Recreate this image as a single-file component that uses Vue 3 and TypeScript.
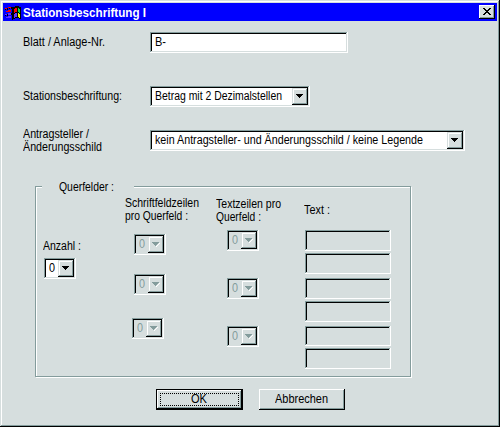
<script setup lang="ts">
import { defineComponent, h, type Directive } from 'vue'

// Condenses a label horizontally so that it takes the given width in pixels.
const vFit: Directive<HTMLElement, number> = {
  mounted(el, { value }) {
    const natural = el.getBoundingClientRect().width
    el.style.width = `${value}px`
    el.style.transform = `scaleX(${value / natural})`
  },
}

const DropButton = defineComponent({
  props: { disabled: Boolean },
  setup(props) {
    return () =>
      h('svg', { width: 16, height: 17, viewBox: '0 0 16 17', 'shape-rendering': 'crispEdges' }, [
        h('path', { fill: '#d6dede', d: 'M0 0h16v17H0z' }),
        h('path', { fill: '#fff', d: 'M1 1h13v1H2v13H1z' }),
        h('path', { fill: '#849c9c', d: 'M14 1h1v15H1v-1h13z' }),
        h('path', { fill: '#000', d: 'M15 0h1v17H0v-1h15z' }),
        props.disabled ? h('path', { fill: '#fff', d: 'M11 7h1v1h-1v1h-1v1H9v1H8v-1h1V9h1V8h1z' }) : null,
        h('path', { fill: props.disabled ? '#849c9c' : '#000', d: 'M4 6h7v1h-1v1H9v1H8v1H7V9H6V8H5V7H4z' }),
      ])
  },
})

const fieldRows = [1, 2, 3]
const textFields = [1, 2, 3, 4, 5, 6]
</script>

<template>
  <main class="window">
    <header class="titlebar">
      <svg class="logo" width="17" height="14" viewBox="0 0 17 14" shape-rendering="crispEdges">
        <path fill="#000" d="M8 1h2V0h4v1h2v12h-2v-1h-4v1H8v1H7V1z" />
        <path fill="#f00" d="M0 2h2v1H0zM3 1h3v1H3zM1 5h2v1H1zM3 4h3v2H3zM9 3h1V2h2v4h-2v1H9z" />
        <path fill="#63f" d="M0 8h2v1H0zM3 7h3v2H3zM1 11h2v1H1zM3 10h3v2H3zM9 8h1V7h2v4h-2v1H9z" />
        <path fill="#000" d="M2 2h1v2H2zM6 1h1v2H6zM2 8h1v2H2zM6 7h1v2H6zM0 3h1v1H0zM4 2h1v1H4zM0 9h1v1H0z" />
        <path fill="#0d4" d="M13 2h1v1h1v4h-1V6h-1z" />
        <path fill="#ff0" d="M13 7h1v1h1v4h-1v-1h-1z" />
      </svg>
      <h1><span v-fit="123" class="t">Stationsbeschriftung I</span></h1>
      <button class="close" aria-label="Schließen">
        <svg width="8" height="7" viewBox="0 0 8 7" shape-rendering="crispEdges">
          <path d="M0 0h2v1h1v1h2V1h1V0h2v1H7v1H6v1H5v1h1v1h1v1h1v1H6V6H5V5H3v1H2v1H0V6h1V5h1V4h1V3H2V2H1V1H0z" />
        </svg>
      </button>
    </header>

    <section class="form">
      <div class="row first">
        <label><span v-fit="82" class="t">Blatt / Anlage-Nr.</span></label>
        <div class="field sheet"><span v-fit="11" class="t">B-</span></div>
      </div>
      <div class="row second">
        <label><span v-fit="99" class="t">Stationsbeschriftung:</span></label>
        <div class="field amount"><span v-fit="127" class="t">Betrag mit 2 Dezimalstellen</span><DropButton /></div>
      </div>
      <div class="row third">
        <label>
          <span v-fit="66" class="t">Antragsteller /</span>
          <span v-fit="79" class="t">Änderungsschild</span>
        </label>
        <div class="field applicant">
          <span v-fit="268" class="t">kein Antragsteller- und Änderungsschild / keine Legende</span><DropButton />
        </div>
      </div>
    </section>

    <section class="group">
      <h2><span v-fit="55" class="t">Querfelder :</span></h2>
      <div class="columns">
        <div class="col count">
          <span v-fit="38" class="t">Anzahl :</span>
          <div class="field mini"><span v-fit="6" class="t">0</span><DropButton /></div>
        </div>
        <div class="col lines">
          <div class="heading">
            <span v-fit="74" class="t">Schriftfeldzeilen</span>
            <span v-fit="63" class="t">pro Querfeld :</span>
          </div>
          <div v-for="n in fieldRows" :key="n" class="field mini off">
            <span v-fit="6" class="t">0</span><DropButton disabled />
          </div>
        </div>
        <div class="col texts">
          <div class="heading">
            <span v-fit="65" class="t">Textzeilen pro</span>
            <span v-fit="45" class="t">Querfeld :</span>
          </div>
          <div v-for="n in fieldRows" :key="n" class="field mini off">
            <span v-fit="6" class="t">0</span><DropButton disabled />
          </div>
        </div>
        <div class="col content">
          <span v-fit="26" class="t">Text :</span>
          <div v-for="n in textFields" :key="n" class="field off"></div>
        </div>
      </div>
    </section>

    <footer class="actions">
      <button class="btn ok"><span class="focus"><span v-fit="16" class="t">OK</span></span></button>
      <button class="btn"><span v-fit="53" class="t">Abbrechen</span></button>
    </footer>
  </main>
</template>

<style>
body {
  margin: 0;
  background: #d6dede;
}
</style>

<style scoped>
.window {
  box-sizing: border-box;
  width: 500px;
  height: 427px;
  padding: 3px;
  overflow: hidden;
  display: flex;
  flex-direction: column;
  background: #d6dede;
  box-shadow: inset -1px -1px #000, inset 1px 1px #d6dede, inset -2px -2px #849c9c, inset 2px 2px #fff;
  font: 12.5px/13px "Liberation Sans", Arial, sans-serif;
  color: #000;
}
.window * {
  box-sizing: border-box;
}
.t {
  display: inline-block;
  white-space: nowrap;
  transform-origin: 0 50%;
}
h1, h2 {
  margin: 0;
  font: inherit;
}
.titlebar {
  flex: none;
  height: 18px;
  display: flex;
  align-items: center;
  padding: 0 2px;
  background: #00f;
}
.logo {
  display: block;
  margin-top: 1px;
}
h1 {
  flex: 1;
  margin-left: 1px;
  font-size: 13px;
  font-weight: bold;
  color: #fff;
}
.close {
  width: 16px;
  height: 14px;
  padding: 0 1px 1px 0;
  display: flex;
  align-items: center;
  justify-content: center;
  border: 0;
  background: #d6dede;
  box-shadow: inset -1px -1px #000, inset 1px 1px #fff, inset -2px -2px #849c9c;
}
.form {
  padding: 11px 0 0 20px;
}
.row {
  display: flex;
  height: 21px;
}
.row label {
  width: 127px;
  flex: none;
  display: flex;
  flex-direction: column;
  align-items: flex-start;
  padding-top: 4px;
}
.second {
  margin-top: 33px;
}
.third {
  margin-top: 23px;
}
.third label {
  padding-top: 0;
  margin-top: -2px;
}
.field {
  flex: none;
  height: 21px;
  padding: 2px 2px 2px 5px;
  display: flex;
  align-items: center;
  justify-content: space-between;
  background: #fff;
  box-shadow: inset -1px -1px #fff, inset 1px 1px #849c9c, inset -2px -2px #d6dede, inset 2px 2px #000;
}
.sheet { width: 198px; }
.amount { width: 160px; }
.applicant { width: 315px; }
.off {
  background: #d6dede;
  color: #849c9c;
}
.mini {
  width: 32px;
}
.group {
  flex: none;
  width: 376px;
  height: 191px;
  margin: 35px 0 0 32px;
  display: flex;
  flex-direction: column;
  align-items: flex-start;
  border: 1px solid #849c9c;
  box-shadow: 1px 1px #fff, inset 1px 1px #fff;
}
h2 {
  width: 92px;
  height: 13px;
  margin: -6px 0 0 6px;
  padding-left: 17px;
  background: #d6dede;
}
.columns {
  display: flex;
  padding: 3px 0 0 7px;
}
.col {
  display: flex;
  flex-direction: column;
  align-items: flex-start;
}
.heading {
  display: flex;
  flex-direction: column;
  align-items: flex-start;
}
.count {
  width: 82px;
  padding-top: 43px;
}
.count .field {
  margin: 5px 0 0 1px;
}
.lines {
  width: 91px;
}
.lines .field {
  margin: 11px 0 8px 9px;
}
.lines .field:last-child {
  margin: 15px 0 0 7px;
}
.texts {
  width: 88px;
  padding-top: 1px;
}
.texts .field {
  margin: 6px 0 21px 11px;
}
.texts .field + .field {
  margin-top: 6px;
}
.content {
  padding-top: 7px;
}
.content .field {
  width: 86px;
  margin: 2px 0 0 1px;
}
.content .field:nth-child(2) { margin-top: 13px; }
.content .field:nth-child(4) { margin-top: 4px; }
.content .field:nth-child(6) { margin-top: 4px; height: 20px; }
.actions {
  display: flex;
  gap: 16px;
  margin: 12px 0 0 153px;
}
.btn {
  width: 86px;
  height: 21px;
  padding: 0 1px 1px 0;
  display: flex;
  align-items: center;
  justify-content: center;
  border: 0;
  font: inherit;
  color: #000;
  background: #d6dede;
  box-shadow: inset -1px -1px #000, inset 1px 1px #fff, inset -2px -2px #849c9c;
}
.ok {
  width: 87px;
  box-shadow: inset 0 0 0 1px #000, inset -2px -2px #000, inset 2px 2px #fff, inset -3px -3px #849c9c;
}
.focus {
  width: 79px;
  height: 13px;
  display: flex;
  align-items: center;
  justify-content: center;
  border: 1px dotted #000;
}
</style>
